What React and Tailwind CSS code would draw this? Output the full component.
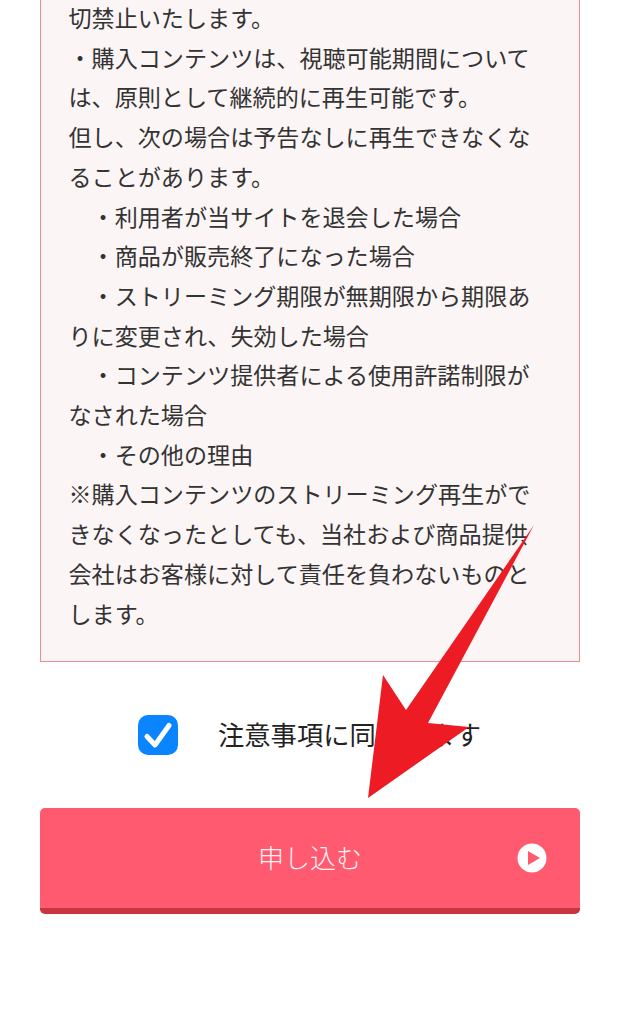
import React from "react";

const FONT = "font-['Noto_Sans_CJK_JP','Noto_Sans',sans-serif]";

export default function App() {
  return (
    <div className={`relative h-[1024px] w-[620px] overflow-hidden bg-white ${FONT}`}>
      <div className="px-10">
        <div className="mt-[-2px] border border-t-0 border-[#ea8f8f] bg-[#fbf5f5] pl-[27.5px] pr-[40px] pb-[28px] text-[23.1px] leading-[39.7px] text-[#333333]">
          <p>切禁止いたします。</p>
          <p>・購入コンテンツは、視聴可能期間については、原則として継続的に再生可能です。</p>
          <p>但し、次の場合は予告なしに再生できなくなることがあります。</p>
          <p>　・利用者が当サイトを退会した場合</p>
          <p>　・商品が販売終了になった場合</p>
          <p>　・ストリーミング期限が無期限から期限ありに変更され、失効した場合</p>
          <p>　・コンテンツ提供者による使用許諾制限がなされた場合</p>
          <p>　・その他の理由</p>
          <p>※購入コンテンツのストリーミング再生ができなくなったとしても、当社および商品提供会社はお客様に対して責任を負わないものとします。</p>
        </div>

        <label className="mt-[53px] flex items-center pl-[98px]">
          <span className="flex h-10 w-10 items-center justify-center rounded-[10px] bg-[#0a84ff]">
            <svg viewBox="0 0 40 40" className="h-10 w-10" fill="none">
              <path d="M9 21.5 L17 30 L31 10.5" stroke="#fff" strokeWidth="5" strokeLinecap="round" strokeLinejoin="round" />
            </svg>
          </span>
          <span className="ml-10 pb-[2px] text-[26.3px] leading-[38px] text-[#222222]">注意事項に同意します</span>
        </label>

        <button
          type="button"
          className="relative mt-[53px] flex h-[106px] w-full items-center justify-center rounded-[5px] border-b-[6px] border-[#c9353d] bg-[#ff5a70] pb-[3px] text-[26px] font-light text-[#fff2f4]"
        >
          申し込む
          <svg viewBox="0 0 30 30" className="absolute right-[33px] top-[35px] h-[30px] w-[30px]">
            <circle cx="15" cy="15" r="14.5" fill="#fff" />
            <path d="M11 8 L23 15 L11 22 Z" fill="#ff5a70" />
          </svg>
        </button>
      </div>

      <svg viewBox="0 0 620 1024" className="absolute left-0 top-0 h-[1024px] w-[620px]">
        <path d="M534 525 L428 723 L469 727 L368 798 L383 675 L406 710 Z" fill="#ed1c24" />
      </svg>
    </div>
  );
}
